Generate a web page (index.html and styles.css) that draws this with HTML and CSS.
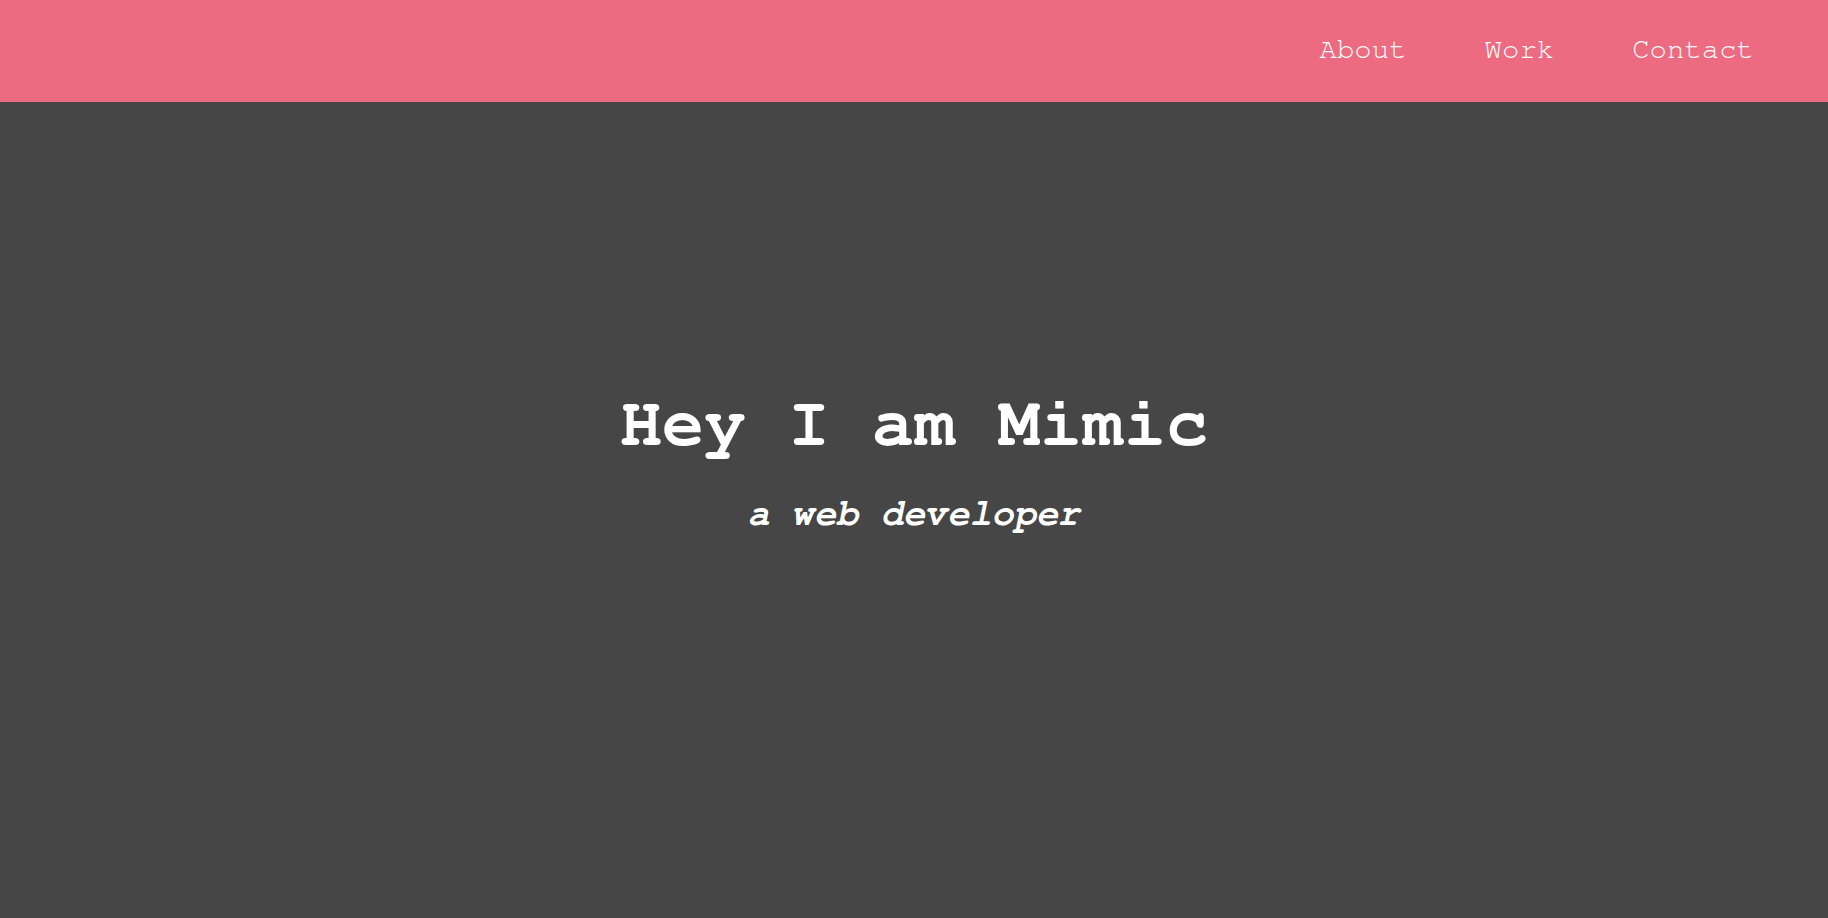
FILE: index.html
```html
<!DOCTYPE html>
<html lang="en">
<head>
<meta charset="utf-8">
<title>Mimic</title>
<link rel="stylesheet" href="styles.css">
</head>
<body>
<header class="topbar">
  <nav class="nav">
    <a class="nav-link" href="#about">About</a>
    <a class="nav-link" href="#work">Work</a>
    <a class="nav-link" href="#contact">Contact</a>
  </nav>
</header>
<main class="hero">
  <h1 class="hero-title">Hey I am Mimic</h1>
  <p class="hero-sub">a web developer</p>
</main>
</body>
</html>
```

FILE: styles.css
```css
html, body {
  margin: 0;
  padding: 0;
}
body {
  background: #464646;
  font-family: FreeMono, "Liberation Mono", "Courier New", monospace;
  color: #ffffff;
  height: 918px;
  overflow: hidden;
}
.topbar {
  box-sizing: border-box;
  height: 102px;
  background: #ec6b81;
  display: flex;
  justify-content: flex-end;
  align-items: center;
  padding: 0 74px 3px 0;
}
.nav {
  display: flex;
  gap: 78px;
}
.nav-link {
  color: #ffffff;
  text-decoration: none;
  font-size: 29px;
  line-height: 1;
}
.hero {
  display: flex;
  flex-direction: column;
  align-items: center;
  padding-top: 287px;
}
.hero-title {
  margin: 0;
  font-size: 70px;
  line-height: 1;
  font-weight: bold;
}
.hero-sub {
  margin: 36px 0 0;
  font-size: 37px;
  line-height: 1;
  font-weight: bold;
  font-style: italic;
}
```
